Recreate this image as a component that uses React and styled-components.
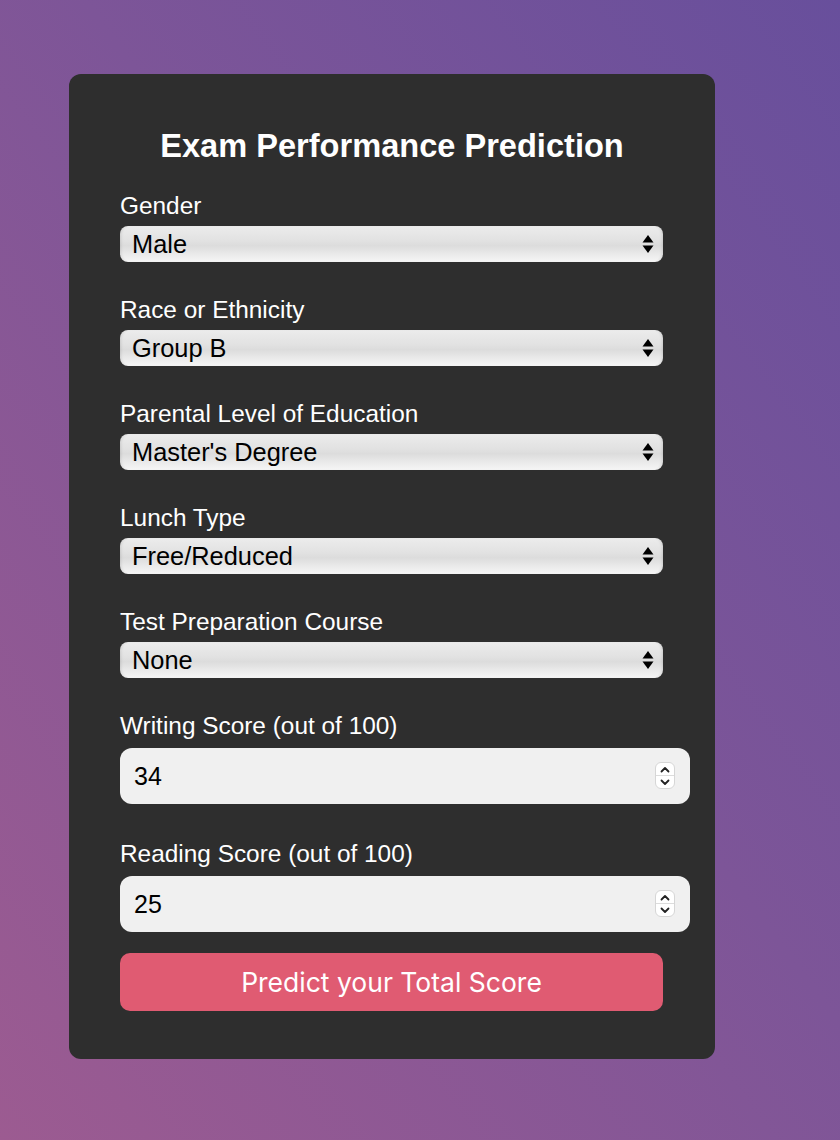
import React from 'react'
import styled, { createGlobalStyle } from 'styled-components'

const GlobalStyle = createGlobalStyle`
    html, body {
        margin: 0;
        padding: 0;
    }
    body {
        min-height: 1140px;
        background: linear-gradient(to top right, #9c5b91 0%, #7d5598 55%, #684f9c 100%);
        font-family: 'Liberation Sans', Arial, sans-serif;
    }
`

const Page = styled.div`
    padding: 74px 0 0 69px;
`

const Card = styled.form`
    box-sizing: border-box;
    width: 646px;
    padding: 53px 51px 48px;
    background: #2e2e2e;
    border-radius: 12px;
    color: #ffffff;
`

const Title = styled.h1`
    margin: 0 0 28px;
    font-size: 32.6px;
    font-weight: bold;
    text-align: center;
    line-height: 37px;
`

const Group = styled.div`
    margin-bottom: ${(props) => props.gap}px;
`

const Label = styled.label`
    display: block;
    font-size: 24.4px;
    line-height: 28px;
    margin-bottom: ${(props) => (props.isNumber ? 8 : 6)}px;
`

const SelectWrap = styled.div`
    position: relative;
    width: 543px;
`

const Select = styled.select`
    appearance: none;
    display: block;
    width: 100%;
    height: 36px;
    margin: 0;
    padding: 0 40px 0 12px;
    border: none;
    border-radius: 8px;
    font-family: 'Liberation Sans', Arial, sans-serif;
    font-size: 25.4px;
    color: #000;
    background: linear-gradient(to bottom, #ececec 0%, #e2e2e2 40%, #dcdcdc 55%, #ebebeb 80%, #f6f6f6 100%);
    box-shadow: inset 3px 0 3px -2px rgba(0, 0, 0, 0.12), inset -3px 0 3px -2px rgba(0, 0, 0, 0.12);
    outline: none;
`

const Arrows = styled.svg`
    position: absolute;
    right: 9px;
    top: 9px;
    pointer-events: none;
`

const InputWrap = styled.div`
    position: relative;
    width: 570px;
`

const NumberInput = styled.input`
    box-sizing: border-box;
    display: block;
    width: 100%;
    height: 56px;
    margin: 0;
    padding: 0 14px;
    border: none;
    border-radius: 12px;
    background: #f0f0f0;
    font-family: 'Liberation Sans', Arial, sans-serif;
    font-size: 25px;
    color: #000;
    outline: none;
    -moz-appearance: textfield;
    &::-webkit-inner-spin-button,
    &::-webkit-outer-spin-button {
        -webkit-appearance: none;
        margin: 0;
    }
`

const Spinner = styled.div`
    position: absolute;
    right: 15px;
    top: 14px;
    width: 20px;
    height: 27px;
    box-sizing: border-box;
    border-radius: 6px;
    background: #ffffff;
    border: 1px solid #d6d6d6;
    display: flex;
    flex-direction: column;
    pointer-events: none;
`

const SpinHalf = styled.div`
    flex: 1;
    display: flex;
    align-items: center;
    justify-content: center;
    ${(props) => props.top && 'border-bottom: 1px solid #dcdcdc;'}
`

const Button = styled.button`
    display: block;
    width: 543px;
    height: 58px;
    border: none;
    border-radius: 10px;
    background: #e05b72;
    color: #ffffff;
    font-family: Inter, 'Noto Sans', sans-serif;
    font-size: 26.5px;
    cursor: pointer;
`

const SelectArrows = () => (
    <Arrows width="12" height="18" viewBox="0 0 12 18">
        <path d="M6 0 L11.5 7.5 L0.5 7.5 Z" fill="#000" />
        <path d="M0.5 10.5 L11.5 10.5 L6 18 Z" fill="#000" />
    </Arrows>
)

const SelectField = ({ label, value, options }) => (
    <Group gap={34}>
        <Label>{label}</Label>
        <SelectWrap>
            <Select defaultValue={value}>
                {options.map((o) => (
                    <option key={o}>{o}</option>
                ))}
            </Select>
            <SelectArrows />
        </SelectWrap>
    </Group>
)

const NumberField = ({ label, value, gap }) => (
    <Group gap={gap}>
        <Label isNumber>{label}</Label>
        <InputWrap>
            <NumberInput type="number" defaultValue={value} min="0" max="100" />
            <Spinner>
                <SpinHalf top>
                    <svg width="10" height="7" viewBox="0 0 10 7">
                        <path d="M1.5 5.5 L5 2 L8.5 5.5" fill="none" stroke="#222" strokeWidth="1.8" strokeLinecap="round" strokeLinejoin="round" />
                    </svg>
                </SpinHalf>
                <SpinHalf>
                    <svg width="10" height="7" viewBox="0 0 10 7">
                        <path d="M1.5 1.5 L5 5 L8.5 1.5" fill="none" stroke="#222" strokeWidth="1.8" strokeLinecap="round" strokeLinejoin="round" />
                    </svg>
                </SpinHalf>
            </Spinner>
        </InputWrap>
    </Group>
)

const App = () => (
    <>
        <GlobalStyle />
        <Page>
            <Card onSubmit={(e) => e.preventDefault()}>
                <Title>Exam Performance Prediction</Title>
                <SelectField label="Gender" value="Male" options={['Male', 'Female']} />
                <SelectField
                    label="Race or Ethnicity"
                    value="Group B"
                    options={['Group A', 'Group B', 'Group C', 'Group D', 'Group E']}
                />
                <SelectField
                    label="Parental Level of Education"
                    value="Master's Degree"
                    options={["Associate's Degree", "Bachelor's Degree", 'High School', "Master's Degree", 'Some College', 'Some High School']}
                />
                <SelectField label="Lunch Type" value="Free/Reduced" options={['Free/Reduced', 'Standard']} />
                <SelectField label="Test Preparation Course" value="None" options={['None', 'Completed']} />
                <NumberField label="Writing Score (out of 100)" value={34} gap={36} />
                <NumberField label="Reading Score (out of 100)" value={25} gap={21} />
                <Button type="submit">Predict your Total Score</Button>
            </Card>
        </Page>
    </>
)

export default App
